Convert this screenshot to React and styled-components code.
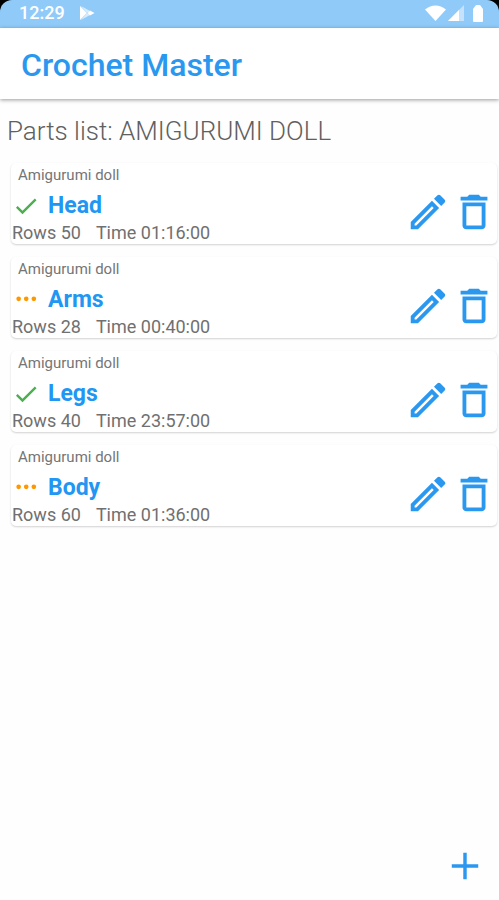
import React from "react";
import styled, { createGlobalStyle } from "styled-components";

const GlobalStyle = createGlobalStyle`
  * { box-sizing: border-box; }
  body {
    margin: 0;
    background: #fefefe;
    color: #757575;
    font-family: Roboto, "Liberation Sans", sans-serif;
  }
`;

const Screen = styled.div`
  display: flex;
  flex-direction: column;
  min-height: 100vh;
`;

const StatusFrame = styled.div`
  background: #000;
`;

const StatusBar = styled.div`
  display: flex;
  align-items: center;
  justify-content: space-between;
  height: 28px;
  padding: 0 16px 2px 19px;
  border-radius: 12px 12px 0 0;
  background: #90caf9;
  color: #fff;
`;

const StatusGroup = styled.div`
  display: flex;
  align-items: center;
  gap: ${({ $gap }) => $gap}px;
`;

const Clock = styled.span`
  font-size: 18px;
  font-weight: 500;
  line-height: 24px;
`;

const Header = styled.header`
  display: flex;
  align-items: center;
  height: 71px;
  padding: 2px 21px 0;
  background: #fff;
  box-shadow: 0 1px 4px rgba(0, 0, 0, 0.4);
`;

const AppTitle = styled.h1`
  margin: 0;
  color: #2b98f0;
  font-size: 32px;
  font-weight: 500;
  line-height: 40px;
`;

const Main = styled.main`
  padding: 16px 2px 0 7px;
`;

const ListTitle = styled.h2`
  margin: 0;
  color: #606060;
  font-size: 26px;
  font-weight: 300;
  line-height: 32px;
`;

const PartList = styled.ul`
  display: flex;
  flex-direction: column;
  gap: 13px;
  margin: 16px 0 0;
  padding: 0 0 0 4px;
  list-style: none;
`;

const PartCard = styled.li`
  display: flex;
  justify-content: space-between;
  padding-bottom: 2px;
  border-radius: 5px;
  background: #fff;
  box-shadow: 0 1px 2px rgba(0, 0, 0, 0.18);
`;

const PartInfo = styled.div`
  display: flex;
  flex-direction: column;
`;

const Project = styled.span`
  padding-left: 7px;
  font-size: 15px;
  line-height: 24px;
`;

const NameRow = styled.div`
  display: flex;
  align-items: center;
  gap: 8px;
  padding-left: 1px;
`;

const PartName = styled.h3`
  margin: 0;
  color: #2196f3;
  font-size: 23px;
  font-weight: 700;
  line-height: 37px;
`;

const Stats = styled.div`
  display: flex;
  gap: 15px;
  padding-left: 1px;
  color: #707070;
  font-size: 18px;
  line-height: 18px;
`;

const Actions = styled.div`
  display: flex;
  align-items: flex-start;
  padding-top: 26px;
`;

const IconButton = styled.button`
  display: flex;
  padding: 0;
  border: 0;
  background: none;
  color: #2b98f0;
  cursor: pointer;
`;

const AddButton = styled(IconButton)`
  align-self: flex-end;
  margin: auto 11px 11px 0;
`;

const Icon = ({ d, size = 46, fill = "currentColor", label }) => (
  <svg
    width={size}
    height={size}
    viewBox="0 0 24 24"
    fill={fill}
    role={label ? "img" : undefined}
    aria-label={label}
    aria-hidden={label ? undefined : true}
  >
    <path d={d} />
  </svg>
);

const icons = {
  edit: "M14.06 9.02l.92.92L5.92 19H5v-.92l9.06-9.06M17.66 3c-.25 0-.51.1-.7.29l-1.83 1.83 3.75 3.75 1.83-1.83a.996.996 0 0 0 0-1.41l-2.34-2.34c-.2-.2-.45-.29-.71-.29zm-3.6 3.19L3 17.25V21h3.75L17.81 9.94l-3.75-3.75z",
  remove: "M6 19c0 1.1.9 2 2 2h8c1.1 0 2-.9 2-2V7H6v12zM8 9h8v10H8V9zm7.5-5l-1-1h-5l-1 1H5v2h14V4z",
  add: "M18.900 12.900h-6v6h-1.800v-6h-6v-1.800h6v-6h1.800v6h6z",
  done: "M9 16.17L4.83 12l-1.42 1.41L9 19 21 7l-1.41-1.41z",
  pending:
    "M5.7 9a2 2 0 1 0 0 4 2 2 0 0 0 0-4zm6.5 0a2 2 0 1 0 0 4 2 2 0 0 0 0-4zm6.5 0a2 2 0 1 0 0 4 2 2 0 0 0 0-4z",
};

const parts = [
  { name: "Head", rows: 50, time: "01:16:00", done: true },
  { name: "Arms", rows: 28, time: "00:40:00", done: false },
  { name: "Legs", rows: 40, time: "23:57:00", done: true },
  { name: "Body", rows: 60, time: "01:36:00", done: false },
];

const PlayIcon = () => (
  <svg width="16" height="16" viewBox="0 0 16 16" aria-hidden="true">
    <path d="M1 1v14l7-7z" fill="#fff" />
    <path d="M2 1l9 5-3 2zM2 15l9-5-3-2z" fill="#d6ebfd" />
    <path d="M11 5.5L15.5 8 11 10.500 8.500 8z" fill="#fff" />
  </svg>
);

const WifiIcon = () => (
  <svg width="21" height="16" viewBox="0 0 21 16" aria-hidden="true">
    <path d="M0 4.500Q10.500-3.500 21 4.500L10.500 16z" fill="#fff" />
  </svg>
);

const SignalIcon = () => (
  <svg width="16" height="16" viewBox="0 0 16 16" aria-hidden="true">
    <path d="M16 0v16H0z" fill="#c4e2fb" />
    <path d="M11 5v11H0z" fill="#fff" />
  </svg>
);

const BatteryIcon = () => (
  <svg width="10" height="17" viewBox="0 0 10 17" aria-hidden="true">
    <path
      d="M3 0h4l3 4v12a1 1 0 0 1-1 1H1a1 1 0 0 1-1-1V4z"
      fill="#fff"
    />
  </svg>
);

const Part = ({ part }) => (
  <PartCard>
    <PartInfo>
      <Project>Amigurumi doll</Project>
      <NameRow>
        <Icon
          d={part.done ? icons.done : icons.pending}
          size={28}
          fill={part.done ? "#4caf50" : "#ff9800"}
          label={part.done ? "Finished" : "In progress"}
        />
        <PartName>{part.name}</PartName>
      </NameRow>
      <Stats>
        <span>Rows {part.rows}</span>
        <span>Time {part.time}</span>
      </Stats>
    </PartInfo>
    <Actions>
      <IconButton type="button" aria-label={`Edit ${part.name}`}>
        <Icon d={icons.edit} />
      </IconButton>
      <IconButton type="button" aria-label={`Delete ${part.name}`}>
        <Icon d={icons.remove} />
      </IconButton>
    </Actions>
  </PartCard>
);

export default function App() {
  return (
    <>
      <GlobalStyle />
      <Screen>
        <StatusFrame>
          <StatusBar>
            <StatusGroup $gap={14}>
              <Clock>12:29</Clock>
              <PlayIcon />
            </StatusGroup>
            <StatusGroup $gap={2}>
              <WifiIcon />
              <StatusGroup $gap={9}>
                <SignalIcon />
                <BatteryIcon />
              </StatusGroup>
            </StatusGroup>
          </StatusBar>
        </StatusFrame>
        <Header>
          <AppTitle>Crochet Master</AppTitle>
        </Header>
        <Main>
          <ListTitle>Parts list: AMIGURUMI DOLL</ListTitle>
          <PartList>
            {parts.map((part) => (
              <Part key={part.name} part={part} />
            ))}
          </PartList>
        </Main>
        <AddButton type="button" aria-label="Add part">
          <Icon d={icons.add} />
        </AddButton>
      </Screen>
    </>
  );
}
